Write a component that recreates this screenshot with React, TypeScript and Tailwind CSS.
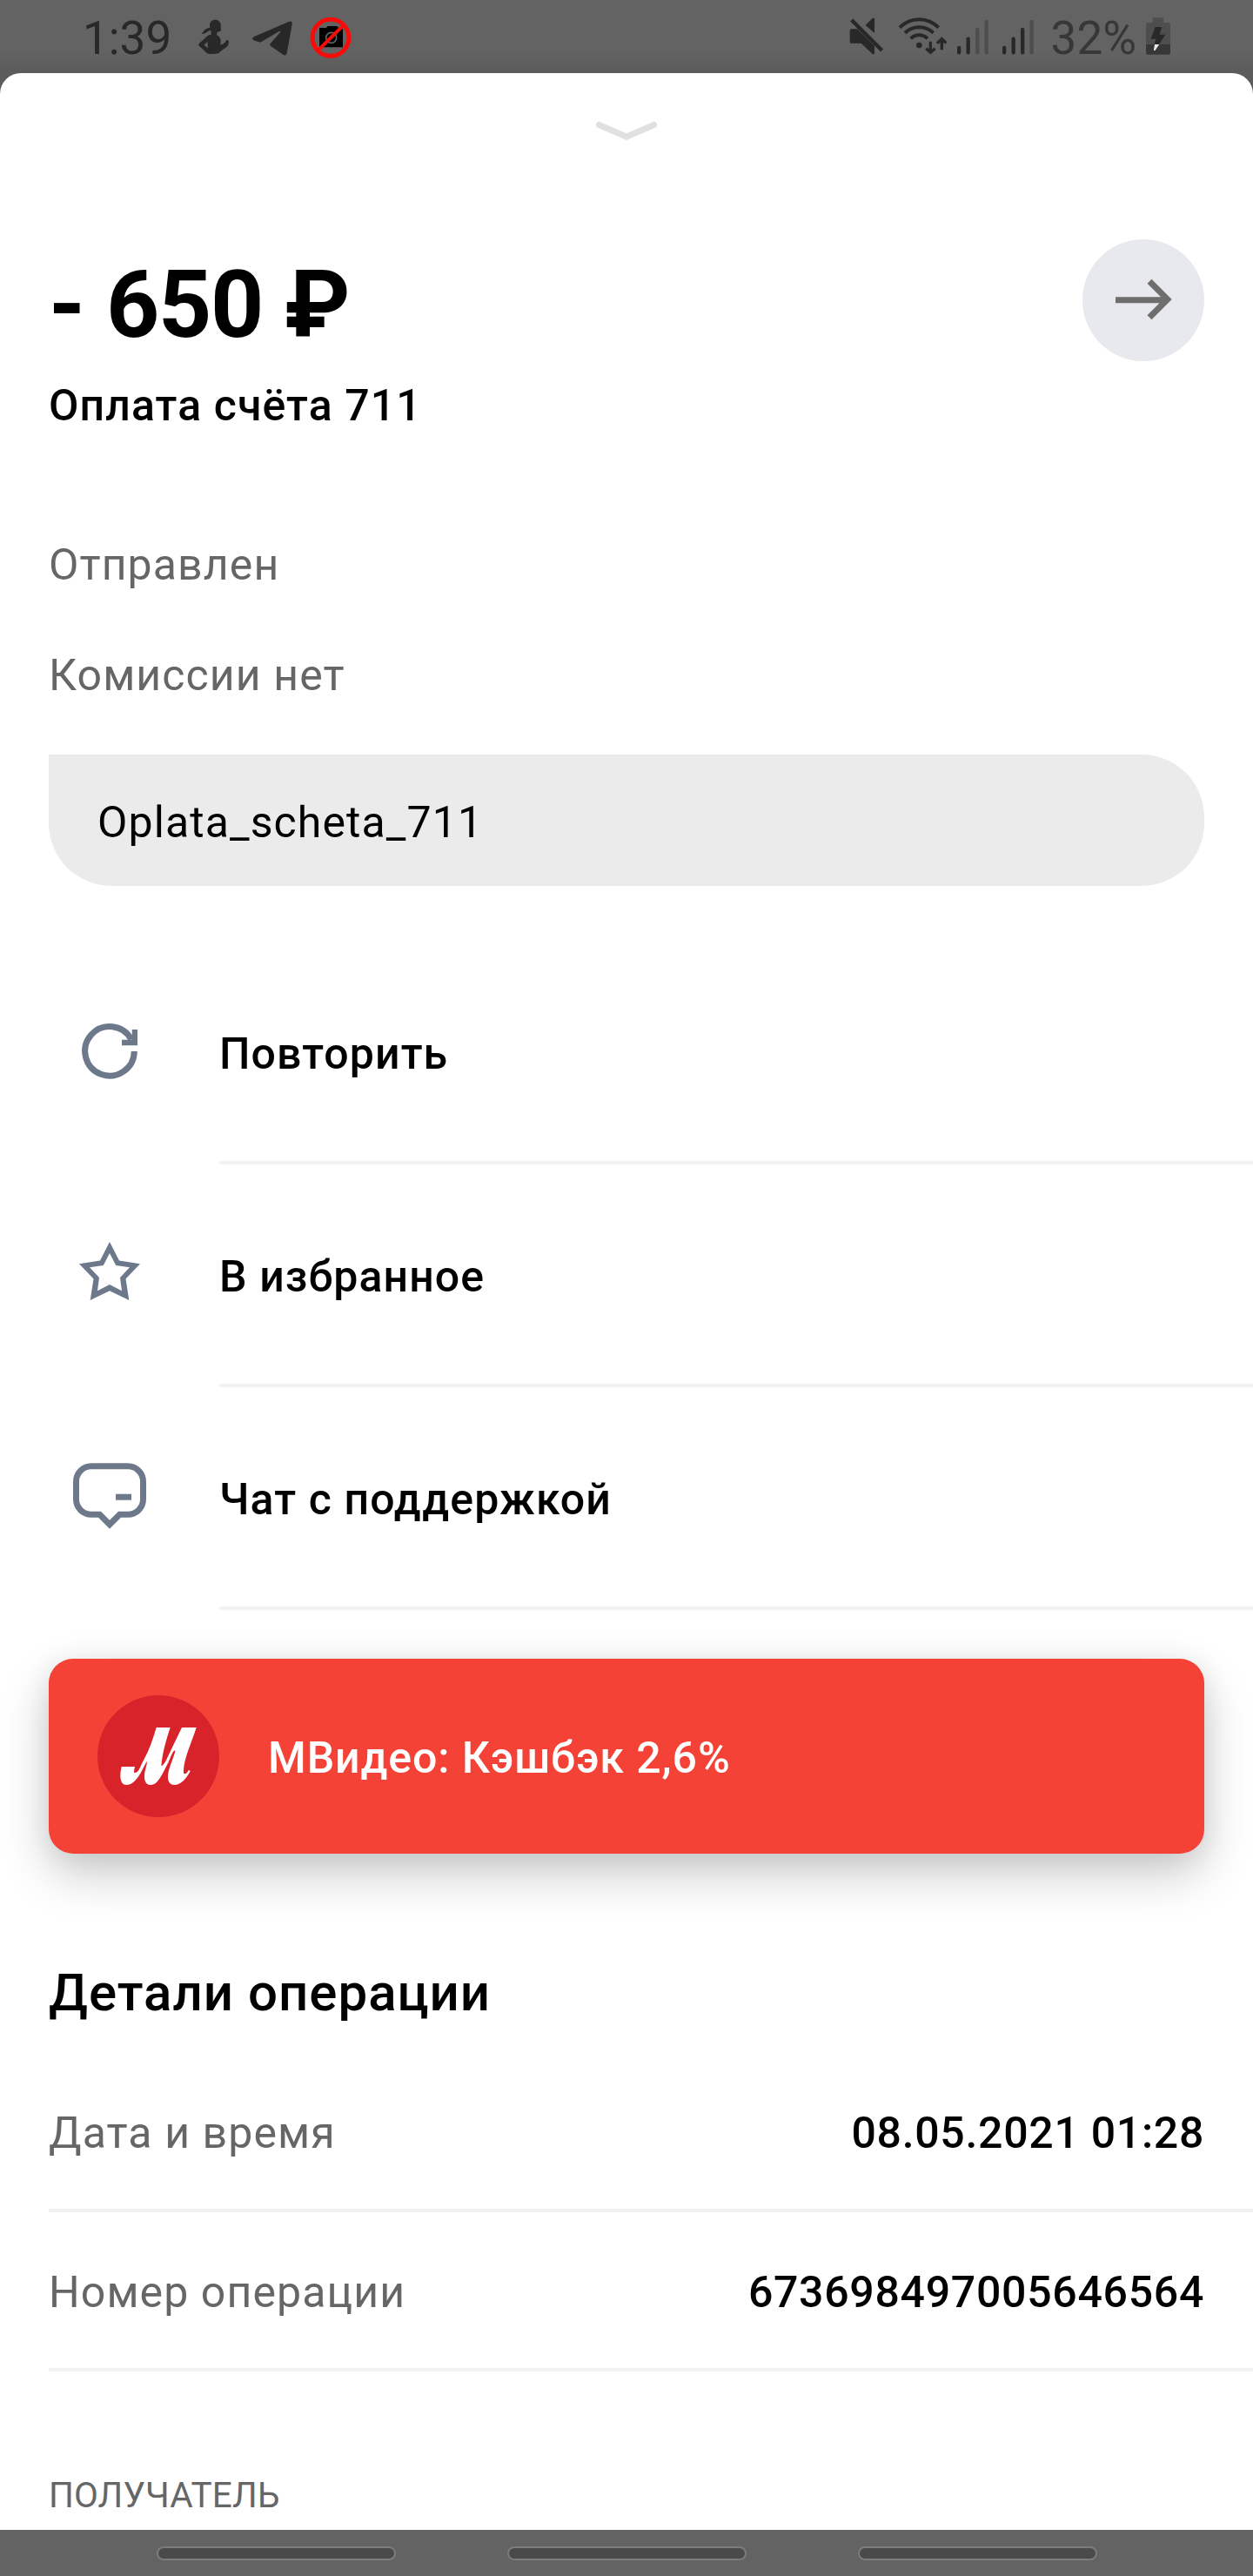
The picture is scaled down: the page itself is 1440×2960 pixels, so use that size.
import type { ReactNode } from 'react'

function StatusBar() {
  return (
    <div className="h-[84px] flex items-start justify-between pl-[95px] pr-[95px]
                    bg-linear-to-b from-[#636363] from-70% to-[#5b5b5b]
                    text-[53px] leading-[88px]">
      <div className="flex items-start text-[#282828]">
        <span className="mr-[31px]">1:39</span>
        <svg viewBox="504 0 105 252" className="w-[35px] h-[84px] mr-[27px]" fill="currentColor">
          <path d="M543 88C543 76 551 68 562 68C574 68 582 77 581 89L582 104C579 110 573 109 569 110L567 121C575 124 581 131 581 142L580 155L590 151C598 148 598 139 602 138C609 137 610 145 607 154C603 165 590 168 580 178C573 187 558 186 545 186C532 186 528 177 520 170L505 157C503 151 511 146 519 139L536 123C541 120 548 121 549 117L546 104C538 105 534 115 515 117C522 108 525 98 544 96Z" />
          <path d="M535 144L523 155L537 166Z" fill="#636363" />
        </svg>
        <svg viewBox="689 0 138 252" className="w-[46px] h-[84px] mr-5" fill="currentColor">
          <path d="M694 127L814 75C822 71 827 75 826 83L808 183C807 190 801 193 795 188L752 158C748 155 749 152 752 149L785 112C788 107 784 106 780 109L722 143C718 146 714 146 709 144L694 139C688 136 688 130 694 127Z" />
        </svg>
        <svg viewBox="888 0 144 252" className="w-12 h-[84px]">
          <path d="M921 96H945L950 90H982L987 96H1002V163H921Z" fill="#000" />
          <circle cx="962" cy="130" r="18" fill="none" stroke="#636363" strokeWidth="5" />
          <circle cx="960" cy="130" r="63" fill="none" stroke="#f80b08" strokeWidth="15" />
          <path d="M1003 88L918 172" stroke="#f80b08" strokeWidth="12" />
        </svg>
      </div>
      <div className="flex items-start text-[#282828]">
        <svg viewBox="48 0 120 252" className="w-10 h-[84px] mr-4" fill="currentColor">
          <path d="M104 87L127 64C131 61 135 62 135 66V114ZM56 100H76L135 158V183C135 187 131 188 127 185L89 149H56C52 149 50 147 50 143V106C50 102 52 100 56 100Z" />
          <path d="M56 69L161 174" stroke="currentColor" strokeWidth="13" />
        </svg>
        <svg viewBox="216 0 171 252" className="w-[57px] h-[84px] mr-[11px]" fill="none"
             stroke="currentColor" strokeWidth="12">
          <path d="M222 95C260 57 318 57 356 95M240 113C268 87 310 87 338 113M260 133C277 117 301 117 318 133" />
          <circle cx="289" cy="156" r="10" fill="currentColor" stroke="none" />
          <path d="M328 143V178M313 167L328 181L344 167M367 172V137M351 149L367 134L382 149" strokeWidth="10" />
        </svg>
        <svg viewBox="420 0 108 252" className="w-9 h-[84px] mr-4" strokeWidth="13" strokeLinecap="round">
          <path d="M426.5 165V181M458 134V181" stroke="currentColor" />
          <path d="M490 102V181M521 75V181" stroke="#4d4d4d" />
        </svg>
        <svg viewBox="576 0 108 252" className="w-9 h-[84px] mr-5" strokeWidth="13" strokeLinecap="round">
          <path d="M582.5 165V181M614 134V181M645.5 102V181" stroke="currentColor" />
          <path d="M677 75V181" stroke="#4d4d4d" />
        </svg>
        <span className="mr-[11px] text-[#373737]">32%</span>
        <svg viewBox="1071 0 84 252" className="w-7 h-[84px]">
          <path d="M1094 78V65Q1094 61 1098 61H1128Q1132 61 1132 65V78H1150Q1155 78 1155 83V153H1071V83Q1071 78 1076 78Z" fill="#4e4e4e" />
          <path d="M1071 153H1155V182Q1155 188 1149 188H1077Q1071 188 1071 182Z" fill="#373737" />
          <path d="M1103 93H1126L1118 119H1138L1116 153H1100L1105 134H1088Z" fill="#282828" />
          <path d="M1101 153H1117L1102 175Q1097 175 1098 171Z" fill="#e8e8e8" />
        </svg>
      </div>
    </div>
  )
}

function RepeatIcon() {
  return (
    <svg viewBox="0 0 84 84" className="size-[84px]" fill="none" stroke="#6d798b">
      <path d="M70.3 42A28.3 28.3 0 1 1 67 28.6" strokeWidth="7" />
      <path d="M70.9 17V32H56" strokeWidth="6.3" />
    </svg>
  )
}

function StarIcon() {
  return (
    <svg viewBox="0 0 84 84" className="size-[84px]" fill="#6d798b" fillRule="evenodd">
      <path d="M42 5L53 26.5L77 30.3L60.5 47.5L64.3 72L42 61.3L19.7 72L23.5 47.5L7 30.3L31 26.5ZM42 18L34.8 32L19 34.3L30 46L28 61.3L42 54L56 61.3L54 46L65 34.3L49.2 32Z" />
    </svg>
  )
}

function ChatIcon() {
  return (
    <svg viewBox="0 0 84 84" className="size-[84px]" fill="none" stroke="#6d798b" strokeWidth="7">
      <path d="M21 6.8H63A17.5 17.5 0 0 1 80.5 24.3V44.8A17.5 17.5 0 0 1 63 62.3H53.5L42 73.8L30.5 62.3H21A17.5 17.5 0 0 1 3.5 44.8V24.3A17.5 17.5 0 0 1 21 6.8Z" />
      <path d="M49 42.2H67" />
    </svg>
  )
}

function ActionRow({ icon, label }: { icon: ReactNode; label: string }) {
  return (
    <div className="flex h-64">
      <div className="w-[252px] h-[252px] flex items-center justify-center">{icon}</div>
      <div className="flex-1 border-b-4 border-[#f2f2f2] pt-[99px] font-medium">{label}</div>
    </div>
  )
}

function DetailRow({ label, value }: { label: string; value: string }) {
  return (
    <div className="ml-14 pr-14 h-[183px] pt-[62px] border-b-4 border-[#f2f2f2]
                    flex items-start justify-between">
      <span className="text-[#666]">{label}</span>
      <span className="font-medium tracking-[0.7px]">{value}</span>
    </div>
  )
}

function CashbackCard() {
  return (
    <div className="mx-14 mt-14 h-56 rounded-[28px] bg-[#f44336] px-14 flex items-center gap-14
                    shadow-[0_24px_56px_rgba(0,0,0,0.2),0_4px_32px_rgba(0,0,0,0.08)]">
      <svg viewBox="336 204 420 420" className="size-[140px]">
        <circle cx="546" cy="414" r="210" fill="#d8232a" />
        <path
          fill="#fff"
          d="M539 315H587C574 355 560 400 556 448C568 442 575 423 584 404L627 315H677C658 375 632 425 633 470C636 480 643 474 651 461L656 466C640 495 622 513 602 513C577 513 575 487 583 460C590 435 602 410 604 395C596 393 590 415 582 432C562 470 545 513 521 513C497 513 495 487 500 465C503 450 508 442 506 432C490 460 470 513 437 513C412 513 412 480 419 450H465C463 460 459 472 466 471C480 469 484 447 496 426C515 392 528 353 539 315Z"
        />
      </svg>
      <span className="pt-1 font-medium text-white tracking-[0.9px]">МВидео: Кэшбэк 2,6%</span>
    </div>
  )
}

export default function App() {
  return (
    <div className="w-[1440px] h-[2960px] overflow-hidden flex flex-col bg-[#5c5c5c]
                    font-['Roboto',sans-serif] text-black whitespace-nowrap">
      <StatusBar />

      <main className="flex-1 min-h-0 overflow-hidden bg-white rounded-t-[24px]
                       text-[50px] leading-[60px] tracking-[1.1px]">
        <div className="h-[191px] flex justify-center pt-14">
          <svg viewBox="0 0 70 21" className="w-[70px] h-[21px]" fill="none" stroke="#e0e0e0"
               strokeWidth="7" strokeLinecap="round">
            <path d="M3.5 3.5L35 17.2L66.5 3.5" />
          </svg>
        </div>

        <header className="px-14 flex items-start justify-between">
          <div className="pt-4">
            <h1 className="text-[107px] leading-[120px] font-bold tracking-[-1.4px]">- 650 ₽</h1>
            <p className="mt-[25px] font-medium">Оплата счёта 711</p>
          </div>
          <button className="size-[140px] rounded-full bg-[#e8e9ee]">
            <svg viewBox="0 0 140 140" className="size-[140px]" fill="none" stroke="#6e6e6e" strokeWidth="7">
              <path d="M38 69.7H96M77 48.2L97.8 69L77 89.8" />
            </svg>
          </button>
        </header>

        <p className="ml-14 mt-[123px] text-[#666]">Отправлен</p>
        <p className="ml-14 mt-[67px] text-[#666]">Комиссии нет</p>
        <div className="mx-14 mt-[61px] h-[151px] pl-14 pt-12 bg-[#ebebeb]
                        rounded-[72px] rounded-tl-none">
          Oplata_scheta_711
        </div>

        <div className="mt-16">
          <ActionRow icon={<RepeatIcon />} label="Повторить" />
          <ActionRow icon={<StarIcon />} label="В избранное" />
          <ActionRow icon={<ChatIcon />} label="Чат с поддержкой" />
        </div>

        <CashbackCard />

        <h2 className="ml-14 mt-[124px] mb-[33px] text-[60px] leading-[72px] font-medium
                       tracking-[1px]">
          Детали операции
        </h2>
        <DetailRow label="Дата и время" value="08.05.2021 01:28" />
        <DetailRow label="Номер операции" value="673698497005646564" />
        <h3 className="ml-14 mt-[117px] text-[40.5px] leading-[50px] tracking-[0.2px] text-[#666]">
          ПОЛУЧАТЕЛЬ
        </h3>
      </main>

      <nav className="h-[53px] bg-[#636363] flex justify-center gap-32 pt-[19px]">
        <span className="w-[275px] h-4 rounded-full bg-[#4a4a4a] border-2 border-[#7c7c7c]" />
        <span className="w-[275px] h-4 rounded-full bg-[#4a4a4a] border-2 border-[#7c7c7c]" />
        <span className="w-[275px] h-4 rounded-full bg-[#4a4a4a] border-2 border-[#7c7c7c]" />
      </nav>
    </div>
  )
}
